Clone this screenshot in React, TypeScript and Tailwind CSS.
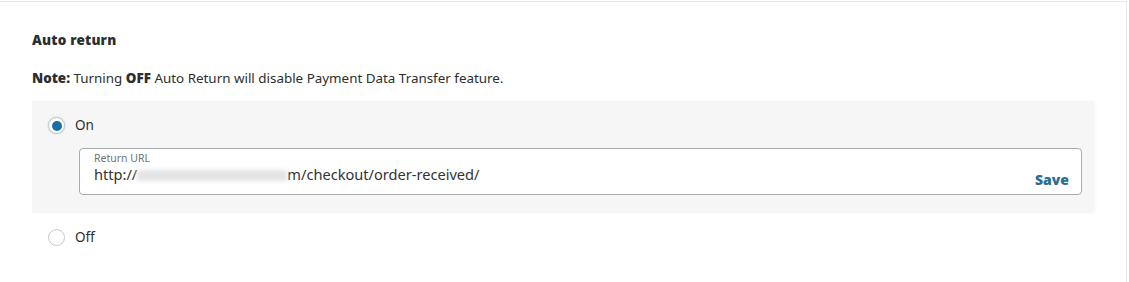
export default function App() {
  return (
    <div className="w-[1129px] h-[282px] bg-white font-['Noto_Sans',sans-serif] text-[#2c2e2f]">
      <div className="mt-[1px] w-[1127px] h-[281px] border-t border-r border-[#e8e8e8] px-8 pt-[29px]">
        <h2 className="text-[13.5px] leading-[18px] font-black tracking-[0.2px]">Auto return</h2>
        <p className="mt-5 text-[13.4px] leading-[18px]">
          <span className="font-black">Note:</span> Turning <span className="font-black">OFF</span> Auto Return will
          disable Payment Data Transfer feature.
        </p>

        {/* On option with return URL */}
        <div className="mt-[14px] bg-[#f6f6f6] pl-4 pr-3 pt-4 pb-[18px] shadow-[2px_0_4px_rgba(0,0,0,0.03)]">
          <label className="flex items-center gap-[10px] h-[17px]">
            <span className="w-[17px] h-[17px] rounded-full border border-[#b7c4cc] bg-white flex items-center justify-center shadow-[0_0_0_1px_rgba(220,230,236,0.8)]">
              <span className="w-[10px] h-[10px] rounded-full bg-[#1b6ea3]" />
            </span>
            <span className="text-[13.5px] leading-[17px]">On</span>
          </label>

          <div className="ml-[31px] mt-[14px] h-[47px] rounded-[4px] border border-[#a7abae] bg-white pl-[14px] pr-3 flex items-end justify-between">
            <div className="flex flex-col pb-[10px]">
              <span className="text-[10.5px] leading-[13px] text-[#6c7378]">Return URL</span>
              <span className="text-[14.6px] leading-[19px] text-[#333] whitespace-nowrap flex items-center">
                http://
                <span className="inline-block w-[150px] h-[11px] bg-[#e3e4e5] blur-[2px] mt-[2px]" />
                m/checkout/order-received/
              </span>
            </div>
            <button className="text-[14px] leading-[18px] font-black text-[#2a6d8f] pb-[5px]">Save</button>
          </div>
        </div>

        {/* Off option */}
        <label className="mt-[16px] ml-4 flex items-center gap-[10px] h-[17px]">
          <span className="w-[17px] h-[17px] rounded-full border border-[#c4c8cb] bg-white" />
          <span className="text-[13.5px] leading-[17px]">Off</span>
        </label>
      </div>
    </div>
  )
}
